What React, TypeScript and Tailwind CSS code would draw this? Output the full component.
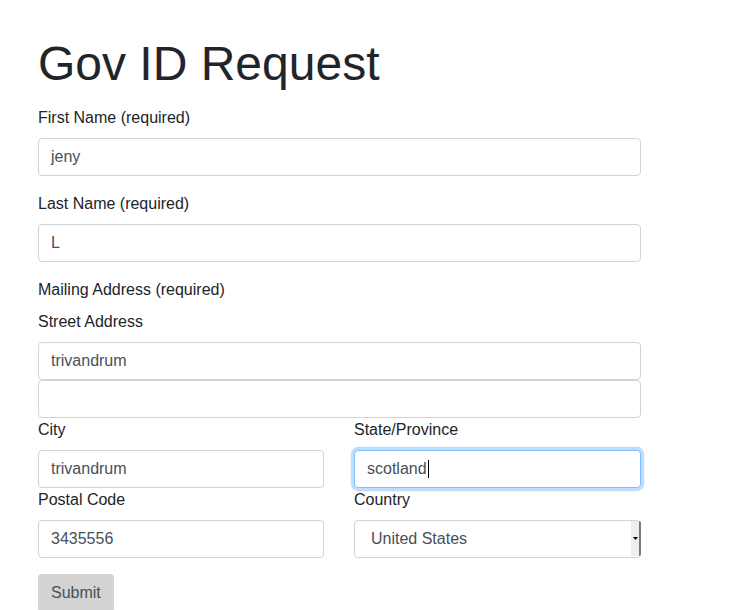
import React from "react";

const font = { fontFamily: '"Liberation Sans", Arial, sans-serif' };

function Label({ children }: { children: React.ReactNode }) {
  return <div className="text-[16px] leading-[24px] text-[#212529] mb-[8px]">{children}</div>;
}

function Input({ value, focused, className = "" }: { value: string; focused?: boolean; className?: string }) {
  return (
    <div
      className={
        "h-[38px] w-full rounded-[4px] border bg-white px-[12px] flex items-center text-[16px] text-[#495057] " +
        (focused
          ? "border-[#80bdff] shadow-[0_0_0_3.2px_rgba(0,123,255,0.25)] "
          : "border-[#ced4da] ") +
        className
      }
    >
      <span>{value}</span>
      {focused && <span className="ml-[1px] inline-block h-[18px] w-[1px] bg-[#000]" />}
    </div>
  );
}

export default function App() {
  return (
    <div className="min-h-[610px] bg-white" style={font}>
      <div className="ml-[38px] w-[603px] pt-[35px]">
        <h1 className="text-[48px] leading-[57px] text-[#212529] mb-[14px]">Gov ID Request</h1>

        <div className="mb-[16px]">
          <Label>First Name (required)</Label>
          <Input value="jeny" />
        </div>
        <div className="mb-[16px]">
          <Label>Last Name (required)</Label>
          <Input value="L" />
        </div>
        <Label>Mailing Address (required)</Label>
        <Label>Street Address</Label>
        <Input value="trivandrum" />
        <Input value="" />

        <div className="grid grid-cols-[286px_287px] gap-x-[30px]">
          <div>
            <Label>City</Label>
            <Input value="trivandrum" />
          </div>
          <div>
            <Label>State/Province</Label>
            <Input value="scotland" focused />
          </div>
          <div>
            <Label>Postal Code</Label>
            <Input value="3435556" />
          </div>
          <div>
            <Label>Country</Label>
            <div className="relative h-[38px] w-full rounded-[4px] border border-[#ced4da] bg-white pl-[16px] flex items-center text-[16px] text-[#495057]">
              <span>United States</span>
              <div className="absolute right-[-1px] top-[0px] bottom-[1px] w-[10px] bg-[#efefef] border-r-[2px] border-[#7a7a7a] rounded-r-[2px] flex items-center justify-center">
                <svg width="5" height="3" viewBox="0 0 5 3">
                  <path d="M0 0 L5 0 L2.5 3 Z" fill="#000" />
                </svg>
              </div>
            </div>
          </div>
        </div>

        <div className="mt-[16px]">
          <div className="inline-flex h-[38px] items-center rounded-[4px] bg-[#d3d3d3] px-[13px] text-[16px] text-[#495057]">
            Submit
          </div>
        </div>
      </div>
    </div>
  );
}
